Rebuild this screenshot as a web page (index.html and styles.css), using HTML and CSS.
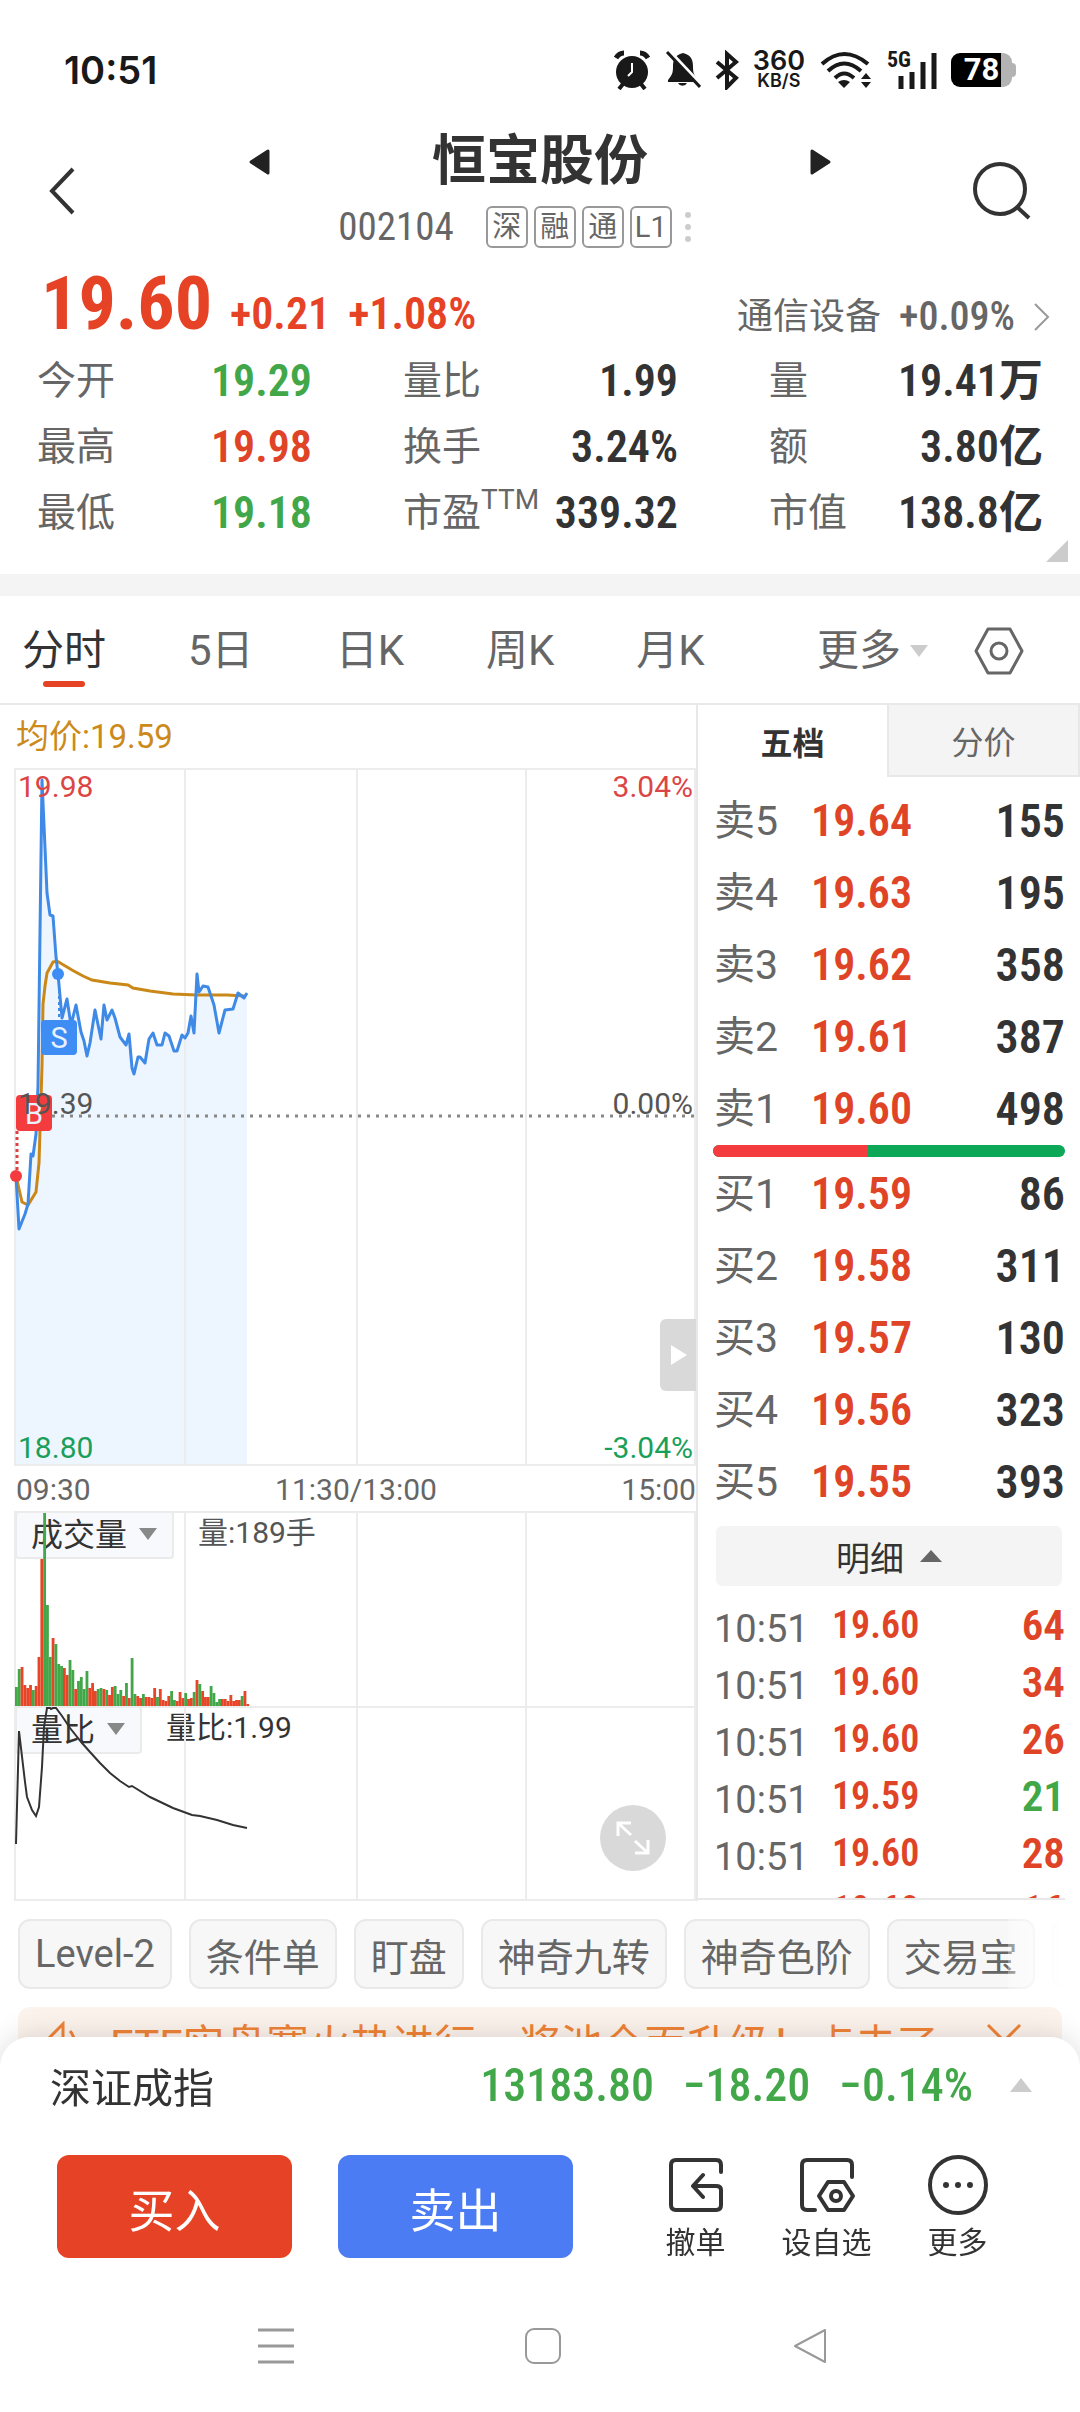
FILE: index.html
```html
<!DOCTYPE html>
<html lang="zh-CN">
<head>
  <meta charset="UTF-8">
  <meta name="viewport" content="width=device-width, initial-scale=1.0">
  <title>恒宝股份 002104</title>
  <link rel="stylesheet" href="styles.css">
</head>
<body>
  <div class="status">
    <span class="clock">10:51</span>
    <div class="status-icons">
      <svg width="38" height="40" viewBox="0 0 38 40">
        <circle cx="19" cy="22" r="16" fill="#191919"/>
        <path d="M10 34L6 39M28 34l4 5" stroke="#191919" stroke-width="4"/>
        <path d="M3 8Q6 3 11 3M35 8Q32 3 27 3" fill="none" stroke="#191919" stroke-width="5"/>
        <path d="M19 13v9l-4 4" fill="none" stroke="#fff" stroke-width="2"/>
      </svg>
      <svg width="36" height="40" viewBox="0 0 36 40">
        <path d="M18 3c9 2 10 8 10 14 0 6 1 8 5 13v2H3v-2c4-5 5-7 5-13C8 11 9 5 18 3z" fill="#191919"/>
        <path d="M13 33a5 5 0 0 0 9 0z" fill="#191919"/>
        <path d="M4 1l33 35" stroke="#fff" stroke-width="4"/>
        <path d="M2 2l33 35" stroke="#191919" stroke-width="3"/>
      </svg>
      <svg width="24" height="40" viewBox="0 0 24 40">
        <path d="M2 12l19 16-9 9V4l9 8L2 28" fill="none" stroke="#191919" stroke-width="4"/>
      </svg>
      <div class="speed"><b>360</b><span>KB/S</span></div>
      <svg width="54" height="40" viewBox="0 0 54 40">
        <path d="M3 14Q25-6 49 14M9 21Q25 6 42 21M16 28Q25 19 35 28" fill="none" stroke="#191919" stroke-width="4"/>
        <path d="M19 32q6-4 12 0l-6 6z" fill="#191919"/>
        <path d="M42 29l5-6 5 6zM42 32h10l-5 6z" fill="#191919"/>
      </svg>
      <div class="signal">
        <span>5G</span>
        <svg width="40" height="40" viewBox="0 0 40 40">
          <path d="M4 26v13M15 22v17M26 12v27M37 3v36" stroke="#191919" stroke-width="5"/>
        </svg>
      </div>
      <div class="battery">78</div>
    </div>
  </div>

  <header class="header">
    <button aria-label="返回">
      <svg width="28" height="50" viewBox="0 0 28 50"><path d="M25 3L4 25l21 22" fill="none" stroke="#333" stroke-width="4"/></svg>
    </button>
    <div class="switcher">
      <button class="step" aria-label="上一只">
        <svg width="22" height="26" viewBox="0 0 22 26"><path d="M20 2v22L3 13z" fill="#222" stroke="#222" stroke-width="3" stroke-linejoin="round"/></svg>
      </button>
      <div class="stock">
        <h1>恒宝股份</h1>
        <div class="stock-sub">
          <span class="code">002104</span>
          <span class="tag">深</span>
          <span class="tag">融</span>
          <span class="tag">通</span>
          <span class="tag">L1</span>
          <svg width="8" height="32" viewBox="0 0 8 32" fill="#ccc"><circle cx="4" cy="4" r="3"/><circle cx="4" cy="16" r="3"/><circle cx="4" cy="28" r="3"/></svg>
        </div>
      </div>
      <button class="step" aria-label="下一只">
        <svg width="22" height="26" viewBox="0 0 22 26"><path d="M2 2v22l17-11z" fill="#222" stroke="#222" stroke-width="3" stroke-linejoin="round"/></svg>
      </button>
    </div>
    <button aria-label="搜索">
      <svg width="60" height="60" viewBox="0 0 60 60" fill="none" stroke="#333" stroke-width="4"><circle cx="28" cy="28" r="25"/><path d="M45 46l12 11"/></svg>
    </button>
  </header>

  <section class="quote">
    <div class="price-row">
      <span class="price num">19.60</span>
      <span class="change num">+0.21</span>
      <span class="change num">+1.08%</span>
      <a class="sector" href="#">通信设备 <span class="num">+0.09%</span>
        <svg width="18" height="30" viewBox="0 0 18 30"><path d="M2 2l13 13L2 28" fill="none" stroke="#999" stroke-width="2"/></svg>
      </a>
    </div>
    <dl class="stats">
      <div><dt>今开</dt><dd class="down">19.29</dd></div>
      <div><dt>量比</dt><dd>1.99</dd></div>
      <div><dt>量</dt><dd>19.41万</dd></div>
      <div><dt>最高</dt><dd class="up">19.98</dd></div>
      <div><dt>换手</dt><dd>3.24%</dd></div>
      <div><dt>额</dt><dd>3.80亿</dd></div>
      <div><dt>最低</dt><dd class="down">19.18</dd></div>
      <div><dt>市盈<sup>TTM</sup></dt><dd>339.32</dd></div>
      <div><dt>市值</dt><dd>138.8亿</dd></div>
    </dl>
    <svg class="corner" width="22" height="22" viewBox="0 0 22 22"><path d="M22 0v22H0z" fill="#ccc"/></svg>
  </section>

  <nav class="periods">
    <button class="active">分时</button>
    <button>5日</button>
    <button>日K</button>
    <button>周K</button>
    <button>月K</button>
    <div class="periods-end">
      <button class="more">更多<svg width="18" height="12" viewBox="0 0 18 12"><path d="M0 0h18L9 12z" fill="#ccc"/></svg></button>
      <button aria-label="设置">
        <svg width="50" height="48" viewBox="0 0 50 48" fill="none" stroke="#666" stroke-width="3" stroke-linejoin="round"><path d="M14 2h22l12 22-12 22H14L2 24z"/><circle cx="25" cy="24" r="8"/></svg>
      </button>
    </div>
  </nav>

  <main class="board">
    <div class="charts">
      <div class="avg">均价:19.59</div>
      <div class="pane price-pane">
        <svg viewBox="0 768 696 698" preserveAspectRatio="none">
          <path d="M16 1176L19 1229 25 1214 28 1204 31 1154 33 1156 36 1134 38 1086 42 780 47 893 50 915 53 916 56 957 58 974 62 1018 67 999 71 1025 76 1005 81 1032 84 1041 87 1056 90 1043 95 1010 101 1039 104 1005 107 1020 112 1010 115 1018 120 1037 126 1045 129 1034 132 1068 134 1074 138 1057 140 1057 145 1063 149 1039 153 1033 157 1045 162 1045 165 1033 169 1036 174 1051 177 1051 182 1035 185 1038 188 1033 191 1016 194 1033 197 974 199 992 203 986 208 987 211 996 214 1005 219 1033 225 1010 233 1009 238 993 244 998 247 993V1466H16z" fill="#edf5fe"/>
          <path class="grid" d="M15 769H695M15 1465H695M15 768V1466M185 768V1466M357 768V1466M526 768V1466M695 768V1466"/>
          <path d="M16 1116H695" stroke="#888" stroke-width="3" stroke-dasharray="3 6"/>
          <path d="M16 1176L19 1189 22 1202 28 1205 36 1192 39 1163 42 1066 43 1004 45 986 47 973 53 962 57 961 72 970 83 976 92 980 110 983 128 985 133 988 150 991 173 994 197 995 227 995 245 996" fill="none" stroke="#c98818" stroke-width="3"/>
          <path d="M16 1176L19 1229 25 1214 28 1204 31 1154 33 1156 36 1134 38 1086 42 780 47 893 50 915 53 916 56 957 58 974 62 1018 67 999 71 1025 76 1005 81 1032 84 1041 87 1056 90 1043 95 1010 101 1039 104 1005 107 1020 112 1010 115 1018 120 1037 126 1045 129 1034 132 1068 134 1074 138 1057 140 1057 145 1063 149 1039 153 1033 157 1045 162 1045 165 1033 169 1036 174 1051 177 1051 182 1035 185 1038 188 1033 191 1016 194 1033 197 974 199 992 203 986 208 987 211 996 214 1005 219 1033 225 1010 233 1009 238 993 244 998 247 993" fill="none" stroke="#3f8ae6" stroke-width="3" stroke-linejoin="round"/>
          <path d="M17 1131V1172" stroke="#d94343" stroke-width="3" stroke-dasharray="3 3"/>
          <path d="M59 978V1020" stroke="#3f8ae6" stroke-width="2" stroke-dasharray="3 3"/>
          <circle cx="16" cy="1176" r="6" fill="#f43c3e"/>
          <circle cx="58" cy="974" r="6" fill="#3d8df4"/>
          <rect x="41" y="1020" width="36" height="35" rx="4" fill="#3d8df4"/>
          <rect x="16" y="1095" width="36" height="36" rx="4" fill="#f43c3e"/>
          <g class="mark"><text x="59" y="1048">S</text><text x="34" y="1124">B</text></g>
        </svg>
        <span class="lab top red">19.98</span>
        <span class="lab top right red">3.04%</span>
        <span class="lab mid">19.39</span>
        <span class="lab mid right">0.00%</span>
        <span class="lab bottom green">18.80</span>
        <span class="lab bottom right green">-3.04%</span>
        <button class="handle" aria-label="收起盘口">
          <svg width="18" height="22" viewBox="0 0 18 22"><path d="M1 1v20l16-10z" fill="#fff"/></svg>
        </button>
      </div>
      <div class="axis"><span>09:30</span><span>11:30/13:00</span><span>15:00</span></div>
      <div class="pane sub-pane">
        <label class="pick">
          <select aria-label="指标一"><option>成交量</option></select>
          <svg width="18" height="12" viewBox="0 0 18 12"><path d="M0 0h18L9 12z" fill="#888"/></svg>
        </label>
        <span class="reading">量:189手</span>
        <svg class="plot" viewBox="0 1511 696 195" preserveAspectRatio="none">
          <path class="grid" d="M15 1512H695M15 1511V1706M185 1511V1706M357 1511V1706M526 1511V1706M695 1511V1706"/>
          <g id="volume"></g>
        </svg>
      </div>
      <div class="pane sub-pane">
        <label class="pick">
          <select aria-label="指标二"><option>量比</option></select>
          <svg width="18" height="12" viewBox="0 0 18 12"><path d="M0 0h18L9 12z" fill="#888"/></svg>
        </label>
        <span class="reading dark">量比:1.99</span>
        <svg class="plot" viewBox="0 1706 696 195" preserveAspectRatio="none">
          <path class="grid" d="M15 1707H695M15 1900H695M15 1706V1901M185 1706V1901M357 1706V1901M526 1706V1901M695 1706V1901"/>
          <path d="M16 1844L19 1731 25 1782 27 1797 32 1810 36 1816 39 1807 42 1767 44 1727 47 1708 50 1708 51 1709 53 1708 56 1708 62 1716 70 1728 82 1743 90 1752 100 1763 110 1773 120 1781 129 1787 132 1786 150 1797 173 1808 192 1815 200 1816 217 1820 233 1825 247 1828" fill="none" stroke="#333" stroke-width="2"/>
        </svg>
        <button class="expand" aria-label="全屏">
          <svg width="36" height="36" viewBox="0 0 36 36" fill="none" stroke="#fff" stroke-width="3"><path d="M3 16V3h13M3 3l13 12M33 20v13H20M33 33L20 21"/></svg>
        </button>
      </div>
    </div>

    <aside class="depth">
      <div class="depth-tabs">
        <button class="active">五档</button>
        <button>分价</button>
      </div>
      <table class="orders">
        <tr><th>卖5</th><td class="up">19.64</td><td>155</td></tr>
        <tr><th>卖4</th><td class="up">19.63</td><td>195</td></tr>
        <tr><th>卖3</th><td class="up">19.62</td><td>358</td></tr>
        <tr><th>卖2</th><td class="up">19.61</td><td>387</td></tr>
        <tr><th>卖1</th><td class="up">19.60</td><td>498</td></tr>
      </table>
      <div class="ratio"><i style="width:44%"></i></div>
      <table class="orders">
        <tr><th>买1</th><td class="up">19.59</td><td>86</td></tr>
        <tr><th>买2</th><td class="up">19.58</td><td>311</td></tr>
        <tr><th>买3</th><td class="up">19.57</td><td>130</td></tr>
        <tr><th>买4</th><td class="up">19.56</td><td>323</td></tr>
        <tr><th>买5</th><td class="up">19.55</td><td>393</td></tr>
      </table>
      <button class="detail">明细<svg width="22" height="12" viewBox="0 0 22 12"><path d="M11 0l11 12H0z" fill="#666"/></svg></button>
      <div class="ticks-wrap">
        <table class="ticks">
          <tr><th>10:51</th><td class="up">19.60</td><td class="up">64</td></tr>
          <tr><th>10:51</th><td class="up">19.60</td><td class="up">34</td></tr>
          <tr><th>10:51</th><td class="up">19.60</td><td class="up">26</td></tr>
          <tr><th>10:51</th><td class="up">19.59</td><td class="down">21</td></tr>
          <tr><th>10:51</th><td class="up">19.60</td><td class="up">28</td></tr>
          <tr><th>10:51</th><td class="up">19.60</td><td class="up">16</td></tr>
        </table>
      </div>
    </aside>
  </main>

  <div class="chips">
    <button>Level-2</button>
    <button>条件单</button>
    <button>盯盘</button>
    <button>神奇九转</button>
    <button>神奇色阶</button>
    <button>交易宝</button>
    <button aria-label="更多"></button>
  </div>

  <div class="banner">
    <svg width="36" height="40" viewBox="0 0 36 40" fill="none" stroke="#f08337" stroke-width="3"><path d="M2 18L17 3v34L2 24zM24 10q8 9 0 20"/></svg>
    <span>ETF实盘赛火热进行，奖池全面升级！点击了</span>
    <button aria-label="关闭"><svg width="36" height="36" viewBox="0 0 36 36"><path d="M2 2l32 32M34 2L2 34" stroke="#f08337" stroke-width="3"/></svg></button>
  </div>

  <footer class="sheet">
    <div class="index-row">
      <span class="index-name">深证成指</span>
      <span class="num">13183.80</span>
      <span class="num">−18.20</span>
      <span class="num">−0.14%</span>
      <svg width="22" height="14" viewBox="0 0 22 14"><path d="M11 0l11 14H0z" fill="#ccc"/></svg>
    </div>
    <div class="actions">
      <button class="trade buy">买入</button>
      <button class="trade sell">卖出</button>
      <button class="tool">
        <svg width="60" height="60" viewBox="0 0 60 60" fill="none" stroke="#333" stroke-width="4" stroke-linecap="round" stroke-linejoin="round"><path d="M55 17v-7q0-5-5-5H10q-5 0-5 5v40q0 5 5 5h40q5 0 5-5V35q0-4-5-4H28M37 20L27 31l10 11"/></svg>
        撤单
      </button>
      <button class="tool">
        <svg width="60" height="60" viewBox="0 0 60 60" fill="none" stroke="#333" stroke-width="4" stroke-linecap="round" stroke-linejoin="round"><path d="M55 22V10q0-5-5-5H10q-5 0-5 5v40q0 5 5 5h8M31 27h16l9 14-9 14H31l-9-14z"/><circle cx="39" cy="41" r="5"/></svg>
        设自选
      </button>
      <button class="tool">
        <svg width="60" height="60" viewBox="0 0 60 60"><circle cx="30" cy="30" r="28" fill="none" stroke="#333" stroke-width="4"/><g fill="#333"><circle cx="18" cy="30" r="3"/><circle cx="30" cy="30" r="3"/><circle cx="42" cy="30" r="3"/></g></svg>
        更多
      </button>
    </div>
    <div class="sysnav">
      <svg width="36" height="36" viewBox="0 0 36 36"><path d="M0 2h36M0 18h36M0 34h36" stroke="#999" stroke-width="3"/></svg>
      <svg width="36" height="36" viewBox="0 0 36 36"><rect x="1" y="1" width="34" height="34" rx="8" fill="none" stroke="#999" stroke-width="2"/></svg>
      <svg width="36" height="36" viewBox="0 0 36 36"><path d="M33 2v32L3 18z" fill="none" stroke="#999" stroke-width="2" stroke-linejoin="round"/></svg>
    </div>
  </footer>

  <script>
    // one value per minute, negative = falling minute (green)
    const volume = [-19,-37,39,21,18,21,-16,20,49,147,-193,-101,-49,68,-62,-42,-40,38,31,-46,-36,17,-25,-29,-17,-35,18,23,15,-17,-18,17,-16,11,19,-20,-12,-16,10,-23,8,-48,-12,10,8,-12,9,9,8,18,-9,17,6,5,10,-15,-6,5,14,8,-13,7,8,-14,26,-22,15,9,9,-20,-13,-4,-7,7,7,5,11,5,6,6,-10,15,2];
    const step = 680 / 241;

    document.getElementById("volume").innerHTML = volume.map((v, i) => {
      const h = Math.abs(v);
      const color = v < 0 ? "#41a748" : "#e64528";
      return `<rect x="${15 + i * step}" y="${1706 - h}" width="${step}" height="${h}" fill="${color}"/>`;
    }).join("");
  </script>
</body>
</html>
```
FILE: styles.css
```css
* {
  box-sizing: border-box;
}
body {
  margin: 0;
  min-height: 100vh;
  background: #fff;
  color: #333;
  font-family: Roboto, "Noto Sans CJK SC", sans-serif;
  overflow: hidden;
}
button, select {
  font: inherit;
  color: inherit;
  background: none;
  border: 0;
  padding: 0;
  margin: 0;
}
svg {
  display: block;
  flex: none;
}
table {
  border-collapse: collapse;
  width: 100%;
}
.num, .code, .stats dd, .orders td, .ticks td {
  font-family: "Liberation Sans Narrow", "Roboto Condensed", Roboto, "Noto Sans CJK SC", sans-serif;
}
.up {
  color: #e04427;
}
.down {
  color: #41a748;
}

/* status bar */
.status {
  display: flex;
  justify-content: space-between;
  align-items: center;
  height: 130px;
  padding: 10px 68px 0 64px;
  color: #191919;
}
.clock {
  font: 600 38px/48px Inter, sans-serif;
}
.status-icons {
  display: flex;
  align-items: center;
  gap: 14px;
}
.speed {
  display: flex;
  flex-direction: column;
  align-items: center;
  font: 600 18px/18px Inter, sans-serif;
}
.speed b {
  font-size: 27px;
  line-height: 22px;
  font-weight: 600;
}
.signal {
  display: flex;
  position: relative;
  padding-left: 10px;
}
.signal span {
  position: absolute;
  left: 0;
  top: 0;
  font: 700 22px/20px "Roboto Condensed", Roboto, sans-serif;
}
.battery {
  position: relative;
  width: 61px;
  height: 34px;
  border-radius: 9px;
  background: linear-gradient(to right, #000 82%, #b3b3b3 82%);
  color: #fff;
  font: 700 31px/34px Roboto, sans-serif;
  text-align: center;
}
.battery::after {
  content: "";
  position: absolute;
  right: -4px;
  top: 10px;
  width: 4px;
  height: 14px;
  border-radius: 0 4px 4px 0;
  background: #b3b3b3;
}

/* header */
.header {
  display: grid;
  grid-template-columns: 60px 1fr 60px;
  align-items: center;
  height: 130px;
  padding: 0 48px 10px;
}
.switcher {
  display: flex;
  justify-content: center;
  align-items: flex-start;
  align-self: start;
}
.step {
  padding-top: 19px;
}
.stock {
  width: 540px;
  text-align: center;
}
.stock h1 {
  margin: 0 0 8px;
  font-size: 54px;
  line-height: 64px;
}
.stock-sub {
  display: flex;
  align-items: center;
  justify-content: center;
  gap: 6px;
  padding-right: 50px;
  color: #666;
}
.code {
  font-size: 39px;
  line-height: 50px;
  margin-right: 26px;
}
.tag {
  width: 42px;
  height: 42px;
  border: 2px solid #999;
  border-radius: 6px;
  font-size: 29px;
  line-height: 38px;
}
.stock-sub svg {
  margin-left: 6px;
}

/* quote */
.quote {
  position: relative;
  padding: 0 37px 28px;
  border-bottom: 22px solid #f4f4f4;
}
.price-row {
  display: flex;
  align-items: baseline;
  height: 88px;
  padding-left: 4px;
  color: #e64225;
}
.price {
  font-size: 74px;
  line-height: 88px;
  font-weight: 700;
}
.change {
  font-size: 44px;
  line-height: 56px;
  font-weight: 600;
  margin-left: 18px;
}
.sector {
  display: flex;
  align-items: center;
  gap: 18px;
  margin-left: auto;
  margin-right: -8px;
  color: #666;
  font-size: 36px;
  line-height: 48px;
  text-decoration: none;
}
.sector .num {
  font-size: 40px;
  font-weight: 500;
}
.stats {
  display: grid;
  grid-template-columns: 275px 275px 1fr;
  column-gap: 91px;
  margin: 0;
}
.stats div {
  display: flex;
  justify-content: space-between;
  white-space: nowrap;
  height: 66px;
  line-height: 66px;
}
.stats dt {
  font-size: 39px;
  color: #666;
}
.stats sup {
  font-size: 28px;
  line-height: 28px;
  vertical-align: 17px;
}
.stats dd {
  margin: 0;
  font-size: 44px;
  font-weight: 600;
}
.corner {
  position: absolute;
  right: 12px;
  bottom: 12px;
}

/* period tabs */
.periods {
  display: flex;
  align-items: center;
  gap: 82px;
  height: 109px;
  padding: 2px 56px 0 22px;
  border-bottom: 2px solid #e9e9e9;
  color: #666;
  font-size: 42px;
  line-height: 60px;
}
.periods .active {
  position: relative;
  color: #333;
}
.periods .active::after {
  content: "";
  position: absolute;
  left: 50%;
  bottom: -6px;
  width: 42px;
  height: 6px;
  margin-left: -21px;
  border-radius: 3px;
  background: #e64225;
}
.periods-end {
  display: flex;
  align-items: center;
  gap: 46px;
  margin-left: auto;
}
.periods .more {
  display: flex;
  align-items: center;
  gap: 9px;
}

/* charts */
.board {
  display: flex;
}
.charts {
  flex: 1;
  min-width: 0;
}
.avg {
  padding-left: 16px;
  height: 63px;
  font-size: 33px;
  line-height: 64px;
  color: #cc8a1a;
}
.pane {
  position: relative;
}
.pane > svg {
  width: 100%;
  height: 100%;
}
.price-pane {
  height: 698px;
}
.grid {
  fill: none;
  stroke: #ececec;
  stroke-width: 2;
}
.mark {
  fill: #e8f1fd;
  font-size: 29px;
  text-anchor: middle;
}
.lab {
  position: absolute;
  left: 18px;
  font-size: 30px;
  line-height: 36px;
  color: #555;
}
.lab.right {
  left: auto;
  right: 3px;
}
.lab.top {
  top: 1px;
}
.lab.mid {
  top: 318px;
}
.lab.bottom {
  bottom: 0;
}
.lab.red {
  color: #dc4545;
}
.lab.green {
  color: #1a9f5a;
}
.handle {
  position: absolute;
  right: 0;
  top: 551px;
  width: 36px;
  height: 72px;
  padding-left: 10px;
  border-radius: 6px 0 0 6px;
  background: #d9d9d9;
}
.axis {
  display: flex;
  justify-content: space-between;
  height: 45px;
  padding-left: 16px;
  font-size: 30px;
  line-height: 48px;
  color: #666;
}
.sub-pane {
  display: flex;
  align-items: flex-start;
  gap: 24px;
  height: 195px;
  padding-left: 15px;
}
.pane > .plot {
  position: absolute;
  left: 0;
  top: 0;
  pointer-events: none;
}
.pick {
  position: relative;
  display: flex;
}
.pick select {
  appearance: none;
  height: 48px;
  padding: 0 44px 0 14px;
  border: 2px solid #ebebeb;
  border-radius: 4px;
  background: #f8f9fd;
  color: #333;
  font-size: 32px;
  line-height: 44px;
}
.pick svg {
  position: absolute;
  right: 17px;
  top: 17px;
}
.reading {
  font-size: 30px;
  line-height: 44px;
  color: #555;
}
.reading.dark {
  color: #333;
}
.expand {
  position: absolute;
  right: 30px;
  bottom: 30px;
  width: 66px;
  height: 66px;
  padding: 15px;
  border-radius: 50%;
  background: #d9d9d9;
}

/* order book */
.depth {
  width: 384px;
  border-left: 2px solid #e8e8e8;
}
.depth-tabs {
  display: flex;
  height: 72px;
  margin-bottom: 8px;
  font-size: 32px;
}
.depth-tabs button {
  flex: 1;
  border: 2px solid #e8e8e8;
  border-top: 0;
  background: #f4f4f4;
  color: #666;
}
.depth-tabs .active {
  border: 0;
  background: none;
  color: #333;
  font-weight: 700;
}
.depth table {
  table-layout: fixed;
}
.depth th, .depth td {
  padding: 0;
  text-align: left;
  font-weight: 600;
}
.depth th {
  padding-left: 16px;
  font-weight: 400;
  color: #666;
}
.depth td:last-child {
  text-align: right;
}
.orders th {
  width: 113px;
  font-size: 41px;
  line-height: 72px;
}
.orders td {
  height: 72px;
  font-size: 44px;
  line-height: 72px;
}
.orders td:last-child {
  padding-right: 15px;
  font-size: 46px;
}
.ratio {
  height: 12px;
  margin: 0 15px 1px;
  border-radius: 6px;
  overflow: hidden;
  background: #0ca858;
}
.ratio i {
  display: block;
  height: 12px;
  background: #f43c3e;
}
.detail {
  display: flex;
  align-items: center;
  justify-content: center;
  gap: 16px;
  width: 346px;
  height: 60px;
  margin: 8px 0 13px 18px;
  border-radius: 6px;
  background: #f4f4f4;
  font-size: 34px;
}
.ticks-wrap {
  height: 301px;
  margin-right: 15px;
  overflow: hidden;
  border-bottom: 2px solid #e8e8e8;
}
.ticks th {
  width: 134px;
  font-size: 38px;
  line-height: 54px;
  vertical-align: bottom;
}
.ticks td {
  height: 57px;
  font-size: 38px;
  line-height: 53px;
  vertical-align: top;
}
.ticks td:last-child {
  font-size: 43px;
}

/* shortcuts and banner */
.chips {
  position: relative;
  display: flex;
  gap: 17px;
  margin: 18px;
  overflow: hidden;
}
.chips button {
  flex: none;
  min-width: 90px;
  height: 70px;
  padding: 0 15px;
  border: 2px solid #e9e9e9;
  border-radius: 12px;
  background: #f7f7f7;
  color: #666;
  font-size: 38px;
}
.chips::after {
  content: "";
  position: absolute;
  right: 0;
  top: 0;
  width: 54px;
  height: 70px;
  background: linear-gradient(to right, rgba(255,255,255,.3), #fff);
}
.banner {
  display: flex;
  align-items: center;
  margin: 0 18px;
  height: 68px;
  padding: 0 40px 0 28px;
  background: #fdf3ed;
  border-radius: 12px;
  color: #f08337;
  font-size: 42px;
}
.banner span {
  margin: 0 auto 0 28px;
  white-space: nowrap;
}

/* bottom sheet */
.sheet {
  position: fixed;
  left: 0;
  right: 0;
  bottom: 0;
  height: 375px;
  border-radius: 30px 30px 0 0;
  background: #fff;
  box-shadow: 0 0 30px rgba(0,0,0,.15);
}
.index-row {
  display: flex;
  align-items: center;
  gap: 29px;
  height: 96px;
  padding: 0 48px 0 50px;
  color: #41a748;
}
.index-name {
  margin-right: auto;
  font-size: 41px;
  color: #333;
}
.index-row .num {
  font-size: 46px;
  font-weight: 500;
}
.index-row svg {
  margin-left: 8px;
}
.actions {
  display: flex;
  align-items: flex-start;
  padding: 22px 57px 0;
}
.trade {
  width: 235px;
  height: 103px;
  margin-right: 46px;
  border-radius: 12px;
  color: #fff;
  font-size: 46px;
}
.buy {
  background: #e64225;
}
.sell {
  margin-right: auto;
  background: #4b7cf3;
}
.tool {
  display: flex;
  flex-direction: column;
  align-items: center;
  gap: 6px;
  width: 131px;
  font-size: 30px;
  line-height: 44px;
}
.sysnav {
  display: flex;
  justify-content: space-between;
  padding: 63px 252px 0 258px;
}
```
